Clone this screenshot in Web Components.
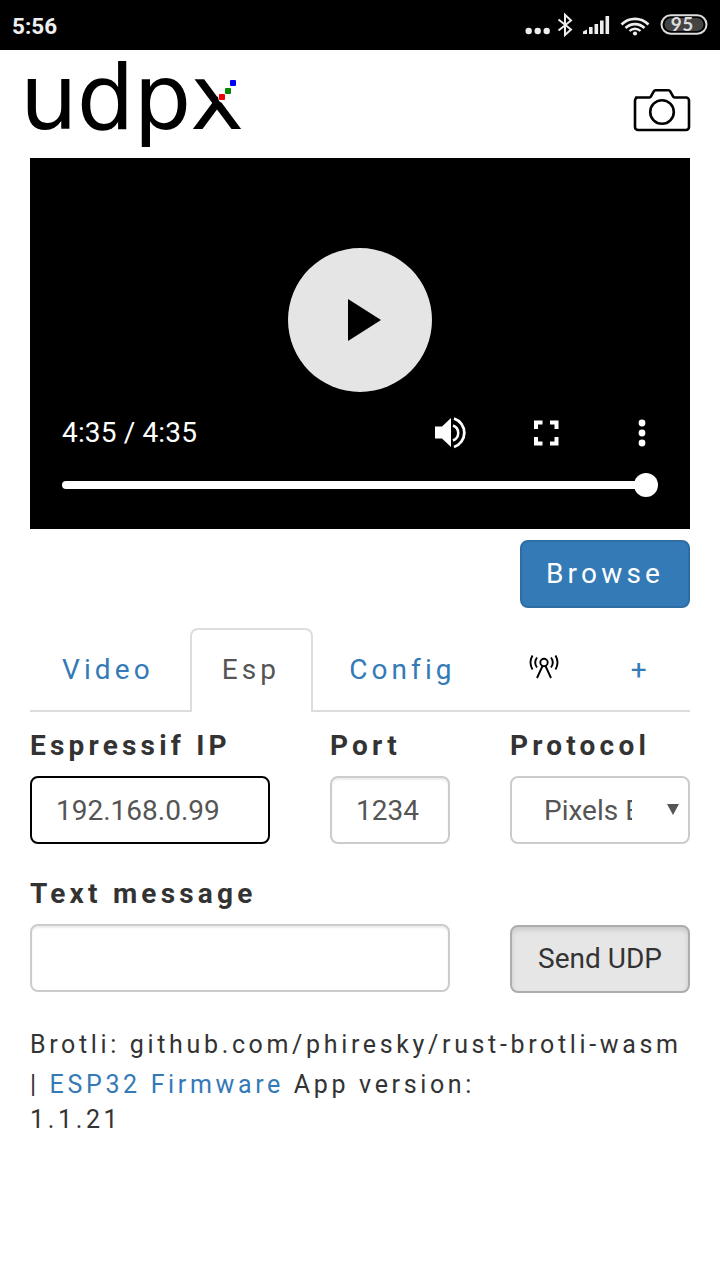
<!DOCTYPE html>
<html><head><meta charset="utf-8"><title>udpx</title>
<style>
html,body{margin:0;padding:0;background:#fff}
body{width:720px;height:1280px;overflow:hidden;font-family:Roboto,sans-serif;color:#333}
</style></head><body>
<status-bar></status-bar>
<app-header></app-header>
<main-panel>
  <video-player></video-player>
  <browse-row></browse-row>
  <tab-nav></tab-nav>
  <esp-form></esp-form>
  <app-footer></app-footer>
</main-panel>
<script>
function def(name, html){
  customElements.define(name, class extends HTMLElement{
    constructor(){super();this.attachShadow({mode:'open'}).innerHTML=html;}
  });
}
def('status-bar',`<style>
:host{display:flex;height:50px;background:#000;align-items:center;justify-content:space-between;box-sizing:border-box;padding:0 12px}
.t{font:700 22.500px/1 Roboto,sans-serif;color:#eee;margin:2px 0 0 0}
svg{display:block;flex:none}
.r{position:relative;width:190px;height:50px}
.b{position:absolute;left:141px;top:14px;width:46.500px;height:20px;text-align:center;font:700 19px/20px Lato,Roboto,sans-serif;color:#ddd;letter-spacing:.5px}
</style><span class="t">5:56</span>
<div class="r"><svg width="190" height="50" viewBox="518 0 190 50">
<g fill="#eee"><circle cx="528.700" cy="31" r="3.200"/><circle cx="537.700" cy="31" r="3.200"/><circle cx="546.700" cy="31" r="3.200"/></g>
<path d="M558.500 19.500 571 29.500 565 35V14.800L571 20.500 558.500 30.500" fill="none" stroke="#eee" stroke-width="2"/>
<g fill="#eee"><path d="M583 34v-2.500l4-2V34z"/><rect x="589" y="27" width="3.600" height="7"/><rect x="594.500" y="24" width="3.600" height="10"/><rect x="600" y="20.500" width="3.600" height="13.500"/><rect x="605.500" y="16" width="3.600" height="18"/></g>
<g fill="none" stroke="#eee" stroke-width="2.600"><path d="M621.500 24.500a19 19 0 0 1 27 0"/><path d="M625.500 28a13.500 13.500 0 0 1 19 0"/></g>
<path d="M629.500 31a8 8 0 0 1 11 0" fill="none" stroke="#eee" stroke-width="2.400"/><circle cx="635" cy="33.500" r="2.100" fill="#eee"/>
<rect x="661.500" y="15.200" width="45" height="18.600" rx="9.300" fill="none" stroke="#ddd" stroke-width="2"/>
<rect x="664.500" y="18" width="39" height="13" rx="6.500" fill="#444"/>
</svg><span class="b">95</span></div>`);
def('app-header',`<style>
:host{display:flex;height:108px;align-items:flex-start;justify-content:space-between;box-sizing:border-box;padding:0 29px 0 20px}
.l{position:relative;width:228px;height:106px;filter:blur(.6px)}
.w{display:block;font:400 91px/96px "DejaVu Sans",sans-serif;letter-spacing:-1px;color:#000;white-space:nowrap}
.m{position:absolute;left:0;top:0}
i{position:absolute;width:6px;height:6px;border-radius:1px}
.cam{display:block;margin-top:37px}
</style><div class="l"><span class="w">udpx</span>
<svg class="m" width="228" height="106" viewBox="20 50 228 106"><polygon points="216,90 221,78 245,78 245,110 226,106 219,101" fill="#fff"/><rect x="130" y="147" width="40" height="9" fill="#fff"/><rect x="100" y="50" width="40" height="11" fill="#fff"/></svg>
<i style="left:210px;top:30px;background:#00f"></i><i style="left:205px;top:38px;background:#080"></i><i style="left:199px;top:44px;background:#e00"></i></div>
<svg class="cam" width="58" height="46" viewBox="633 87 58 46"><path d="M636 97.500h13.500a1.500 1.500 0 0 0 1.300-.8l3-5.400a2 2 0 0 1 1.700-1h13a2 2 0 0 1 1.700 1l3 5.400a1.500 1.500 0 0 0 1.300.8H686a3 3 0 0 1 3 3V127a3 3 0 0 1-3 3H638a3 3 0 0 1-3-3V100.500a3 3 0 0 1 3-3z" fill="none" stroke="#000" stroke-width="2.600" stroke-linejoin="round"/><circle cx="662" cy="112" r="11.800" fill="none" stroke="#000" stroke-width="2.600"/></svg>`);
def('main-panel',`<style>:host{display:block;padding:0 30px}</style><slot></slot>`);
def('video-player',`<style>
:host{display:block;position:relative;height:371px;background:#000;color:#fff;box-sizing:border-box;padding:253px 32px 0}
.play{position:absolute;left:258px;top:90px;width:144px;height:144px;border-radius:50%;background:#e5e5e5;display:flex;align-items:center;justify-content:center}
.play svg{margin-left:8px}
.ctl{display:flex;align-items:center;height:44px}
.time{font:400 28px/44px Roboto,sans-serif;color:#fff;flex:1;letter-spacing:.15px}
svg{display:block;flex:none}
.track{height:8px;border-radius:4px;background:#fff;margin:26px 0 0;position:relative;width:584px}
.thumb{position:absolute;right:-12px;top:-8px;width:24px;height:24px;border-radius:50%;background:#fff}
</style>
<div class="play"><svg width="33" height="42" viewBox="0 0 33 42"><path d="M0 0 33 21 0 42z" fill="#000"/></svg></div>
<div class="ctl"><span class="time">4:35 / 4:35</span>
<svg width="32" height="32" viewBox="434 417 32 32" style="margin-right:67px"><path d="M435 426.500h7l9-8.500v29l-9-8.500h-7z" fill="#fff"/><path d="M453 425.500a8 8 0 0 1 0 15" fill="none" stroke="#fff" stroke-width="2.500"/><path d="M454 418.500a15 15 0 0 1 0 28.500" fill="none" stroke="#fff" stroke-width="2.800"/></svg>
<svg width="26" height="26" viewBox="533 420 26 26" style="margin-right:79px"><path d="M536 429v-6.500h6.500M550 422.500h6.500V429M556.500 437v6.500H550M542.500 443.500H536V437" fill="none" stroke="#fff" stroke-width="4"/></svg>
<svg width="8" height="30" viewBox="638 418 8 30" style="margin-right:12px"><g fill="#fff"><circle cx="642" cy="423" r="3.400"/><circle cx="642" cy="433" r="3.400"/><circle cx="642" cy="443" r="3.400"/></g></svg>
</div>
<div class="track"><div class="thumb"></div></div>`);
def('browse-row',`<style>
:host{display:flex;justify-content:flex-end;padding-top:11px}
.b{box-sizing:border-box;width:170px;height:68px;background:#337ab7;border:2px solid #2e6da4;border-radius:8px;color:#fff;font:400 28px/64px Roboto,sans-serif;letter-spacing:4.200px;text-align:center}
</style><div class="b">Browse</div>`);
def('tab-nav',`<style>
:host{display:flex;margin-top:20px;border-bottom:2px solid #ddd;height:82px;font:400 28px/40px Roboto,sans-serif;letter-spacing:4.100px;color:#337ab7}
.t{box-sizing:border-box;height:84px;padding:20px 30px 0;border:2px solid transparent;border-bottom:0;margin-right:4px;white-space:nowrap;border-radius:8px 8px 0 0}
.a{color:#555;border-color:#ddd;background:#fff;padding-right:31px}
svg{display:block;margin-top:4px}
.p{padding-left:39px;margin-right:0;letter-spacing:0}
</style>
<div class="t">Video</div><div class="t a">Esp</div><div class="t">Config</div>
<div class="t" style="padding-left:35px;padding-right:25px"><svg width="30" height="26" viewBox="529 655 30 26"><g fill="none" stroke="#000" stroke-width="1.900"><circle cx="544" cy="663.500" r="3.700"/><path d="M542.500 667 537 679M545.500 667 551 679"/><path d="M537 658.500a8.500 8.500 0 0 0 0 10M551 658.500a8.500 8.500 0 0 1 0 10M532.500 656.500a14 14 0 0 0 0 14M555.500 656.500a14 14 0 0 1 0 14"/></g></svg></div>
<div class="t p">+</div>`);
def('text-box',`<style>
:host{display:block;box-sizing:border-box;height:68px;border:2px solid #ccc;border-radius:8px;box-shadow:inset 0 2px 2px rgba(0,0,0,.075);background:#fff;font:400 28px/66px Roboto,sans-serif;color:#555;padding-left:24px;white-space:nowrap;overflow:hidden}
:host([focus]){border-color:#000;box-shadow:none}
</style><slot></slot>`);
def('select-box',`<style>
:host{display:block;position:relative;box-sizing:border-box;height:68px;border:2px solid #ccc;border-radius:8px;background:#fff;font:400 28px/66px Roboto,sans-serif;color:#555}
.v{position:absolute;left:32px;top:0;width:88px;overflow:hidden;white-space:nowrap}
svg{position:absolute;left:155px;top:26px}
</style><div class="v"><slot></slot></div><svg width="12" height="11" viewBox="0 0 12 11"><path d="M0 0h12L6 11z" fill="#555"/></svg>`);
def('esp-form',`<style>
:host{display:block;padding-top:18px}
.row{display:flex;align-items:flex-start}
.lb{font:700 28px/32px Roboto,sans-serif;letter-spacing:4.200px;color:#333;white-space:nowrap;margin-bottom:14px}
.c1{width:240px;margin-right:60px}.c2{width:120px;margin-right:60px}.c3{width:180px}
.c4{width:420px;margin-right:60px}
.r2{margin-top:34px}
.btn{box-sizing:border-box;width:180px;height:68px;margin-top:47px;background:#e6e6e6;border:2px solid #adadad;border-radius:8px;box-shadow:inset 0 3px 5px rgba(0,0,0,.125);font:400 28px/64px Roboto,sans-serif;color:#333;text-align:center}
</style>
<div class="row">
<div class="c1"><div class="lb">Espressif IP</div><text-box focus>192.168.0.99</text-box></div>
<div class="c2"><div class="lb">Port</div><text-box>1234</text-box></div>
<div class="c3"><div class="lb">Protocol</div><select-box>Pixels Brotli</select-box></div>
</div>
<div class="row r2">
<div class="c4"><div class="lb">Text message</div><text-box></text-box></div>
<div class="btn">Send UDP</div>
</div>`);
def('app-footer',`<style>
:host{display:block;margin-top:34px;font:400 25px/36px Roboto,sans-serif;letter-spacing:3.650px;color:#333;white-space:nowrap}
a{color:#337ab7;text-decoration:none}
.m{margin-top:4px}
.v{margin-top:-1px}
</style><div>Brotli: github.com/phiresky/rust-brotli-wasm</div>
<div class="m">| <a>ESP32 Firmware</a> App version:</div>
<div class="v">1.1.21</div>`);
</script>
</body></html>
